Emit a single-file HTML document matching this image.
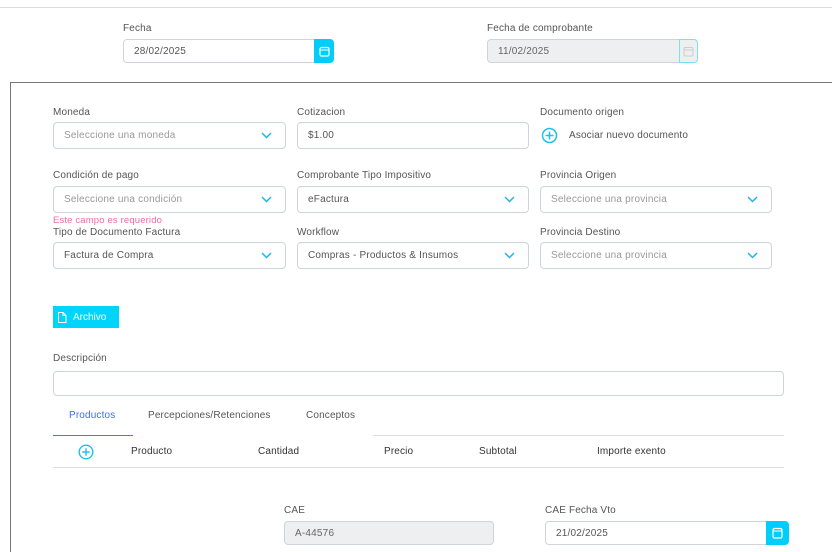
<!DOCTYPE html>
<html><head><meta charset="utf-8"><style>
*{box-sizing:border-box;margin:0;padding:0}
body{width:832px;height:547px;overflow:hidden;background:#fff;font-family:"Liberation Sans",sans-serif;font-size:10px;color:#555;position:relative}
.a{position:absolute}
.lbl{position:absolute;font-size:10px;color:#555;line-height:12px;letter-spacing:0.15px}
.in{position:absolute;border:1px solid #cfd4da;border-radius:4px;background:#fff;padding-left:10px;display:flex;align-items:center;font-size:10px;color:#555;letter-spacing:0.2px}
.ph{color:#999}
.dis{background:#eeeff1}
.chev{position:absolute;right:13px;top:50%;margin-top:-4px}
.cal{position:absolute;background:#00cdfa;border-radius:0 4px 4px 0;display:flex;align-items:center;justify-content:center}
</style></head><body>
<div class="a" style="left:0;top:7px;width:832px;height:1px;background:#ddd"></div>

<div class="lbl" style="left:123px;top:23px">Fecha</div>
<div class="in" style="left:123px;top:39px;width:193px;height:24px;border-radius:4px 0 0 4px">28/02/2025</div>
<div class="cal" style="left:314px;top:39px;width:20px;height:24px"><svg width="11" height="11" viewBox="0 0 11 11"><rect x="1" y="1.5" width="9" height="8.5" rx="1.5" fill="none" stroke="#fff" stroke-width="1.2"/><line x1="1" y1="4" x2="10" y2="4" stroke="#fff"/></svg></div>

<div class="lbl" style="left:487px;top:23px">Fecha de comprobante</div>
<div class="in dis" style="left:487px;top:39px;width:193px;height:24px;border-radius:4px 0 0 4px;color:#666">11/02/2025</div>
<div class="cal" style="left:679px;top:39px;width:19px;height:24px;background:#eeeff1;border:1px solid #7fdcf5"><svg width="11" height="11" viewBox="0 0 11 11"><rect x="1" y="1.5" width="9" height="8.5" rx="1.5" fill="none" stroke="#ccc" stroke-width="1"/><line x1="1" y1="4" x2="10" y2="4" stroke="#ccc"/></svg></div>

<div class="a" style="left:10px;top:82px;width:822px;height:470px;border-top:1px solid #777;border-left:1px solid #777"></div>

<div class="lbl" style="left:53px;top:107px">Moneda</div>
<div class="in" style="left:53px;top:122px;width:233px;height:27px"><span class="ph">Seleccione una moneda</span><svg class="chev" width="11" height="7" viewBox="0 0 11 7"><path d="M1 1l4.5 4.5L10 1" fill="none" stroke="#1fb6e8" stroke-width="1.5"/></svg></div>
<div class="lbl" style="left:297px;top:107px">Cotizacion</div>
<div class="in" style="left:297px;top:122px;width:232px;height:27px">$1.00</div>
<div class="lbl" style="left:540px;top:107px">Documento origen</div>
<svg class="a" style="left:541px;top:127px" width="17" height="17" viewBox="0 0 17 17"><circle cx="8.5" cy="8.5" r="7" fill="none" stroke="#1fc0ee" stroke-width="1.5"/><path d="M8.5 4.5v8M4.5 8.5h8" stroke="#1fc0ee" stroke-width="1.5"/></svg>
<div class="lbl" style="left:569px;top:130px;color:#555">Asociar nuevo documento</div>

<div class="lbl" style="left:53px;top:170px">Condición de pago</div>
<div class="in" style="left:53px;top:186px;width:233px;height:27px"><span class="ph">Seleccione una condición</span><svg class="chev" width="11" height="7" viewBox="0 0 11 7"><path d="M1 1l4.5 4.5L10 1" fill="none" stroke="#1fb6e8" stroke-width="1.5"/></svg></div>
<div class="lbl" style="left:297px;top:170px">Comprobante Tipo Impositivo</div>
<div class="in" style="left:297px;top:186px;width:232px;height:27px">eFactura<svg class="chev" width="11" height="7" viewBox="0 0 11 7"><path d="M1 1l4.5 4.5L10 1" fill="none" stroke="#1fb6e8" stroke-width="1.5"/></svg></div>
<div class="lbl" style="left:540px;top:170px">Provincia Origen</div>
<div class="in" style="left:540px;top:186px;width:232px;height:27px"><span class="ph">Seleccione una provincia</span><svg class="chev" width="11" height="7" viewBox="0 0 11 7"><path d="M1 1l4.5 4.5L10 1" fill="none" stroke="#1fb6e8" stroke-width="1.5"/></svg></div>
<div class="lbl" style="left:53px;top:215px;color:#f06ba8;font-size:9.5px">Este campo es requerido</div>

<div class="lbl" style="left:53px;top:227px">Tipo de Documento Factura</div>
<div class="in" style="left:53px;top:242px;width:233px;height:27px">Factura de Compra<svg class="chev" width="11" height="7" viewBox="0 0 11 7"><path d="M1 1l4.5 4.5L10 1" fill="none" stroke="#1fb6e8" stroke-width="1.5"/></svg></div>
<div class="lbl" style="left:297px;top:227px">Workflow</div>
<div class="in" style="left:297px;top:242px;width:232px;height:27px">Compras - Productos &amp; Insumos<svg class="chev" width="11" height="7" viewBox="0 0 11 7"><path d="M1 1l4.5 4.5L10 1" fill="none" stroke="#1fb6e8" stroke-width="1.5"/></svg></div>
<div class="lbl" style="left:540px;top:227px">Provincia Destino</div>
<div class="in" style="left:540px;top:242px;width:232px;height:27px"><span class="ph">Seleccione una provincia</span><svg class="chev" width="11" height="7" viewBox="0 0 11 7"><path d="M1 1l4.5 4.5L10 1" fill="none" stroke="#1fb6e8" stroke-width="1.5"/></svg></div>

<div class="a" style="left:53px;top:306px;width:66px;height:22px;background:#00d4fa;color:#fff;display:flex;align-items:center;padding-left:3px">
<svg width="12" height="13" viewBox="0 0 12 13"><path d="M2.5 1.5h4.5l3 3v7h-7.5z M7 1.5v3h3" fill="none" stroke="#fff" stroke-width="1"/></svg><span style="margin-left:5px">Archivo</span></div>

<div class="lbl" style="left:53px;top:353px">Descripción</div>
<div class="in" style="left:53px;top:371px;width:731px;height:25px"></div>

<div class="lbl" style="left:69px;top:410px;color:#3d6ef0">Productos</div>
<div class="lbl" style="left:148px;top:410px">Percepciones/Retenciones</div>
<div class="lbl" style="left:306px;top:410px">Conceptos</div>
<div class="a" style="left:53px;top:435px;width:80px;height:1px;background:#3d7ee8"></div>
<div class="a" style="left:373px;top:435px;width:411px;height:1px;background:#ddd"></div>

<svg class="a" style="left:78px;top:444px" width="16" height="16" viewBox="0 0 16 16"><circle cx="8" cy="8" r="6.8" fill="none" stroke="#1fc0ee" stroke-width="1.4"/><path d="M8 4.3v7.4M4.3 8h7.4" stroke="#1fc0ee" stroke-width="1.4"/></svg>
<div class="lbl" style="left:131px;top:446px;color:#333">Producto</div>
<div class="lbl" style="left:258px;top:446px;color:#333">Cantidad</div>
<div class="lbl" style="left:384px;top:446px;color:#333">Precio</div>
<div class="lbl" style="left:479px;top:446px;color:#333">Subtotal</div>
<div class="lbl" style="left:597px;top:446px;color:#333">Importe exento</div>
<div class="a" style="left:53px;top:467px;width:731px;height:1px;background:#ddd"></div>

<div class="lbl" style="left:284px;top:505px">CAE</div>
<div class="in dis" style="left:284px;top:521px;width:210px;height:24px;color:#666;align-items:center">A-44576</div>
<div class="lbl" style="left:545px;top:505px">CAE Fecha Vto</div>
<div class="in" style="left:545px;top:521px;width:222px;height:24px;border-radius:4px 0 0 4px">21/02/2025</div>
<div class="cal" style="left:766px;top:521px;width:23px;height:24px"><svg width="11" height="12" viewBox="0 0 11 12"><rect x="1" y="1.5" width="9" height="9.5" rx="1.5" fill="none" stroke="#fff" stroke-width="1.2"/><line x1="1" y1="4" x2="10" y2="4" stroke="#fff"/></svg></div>
</body></html>
